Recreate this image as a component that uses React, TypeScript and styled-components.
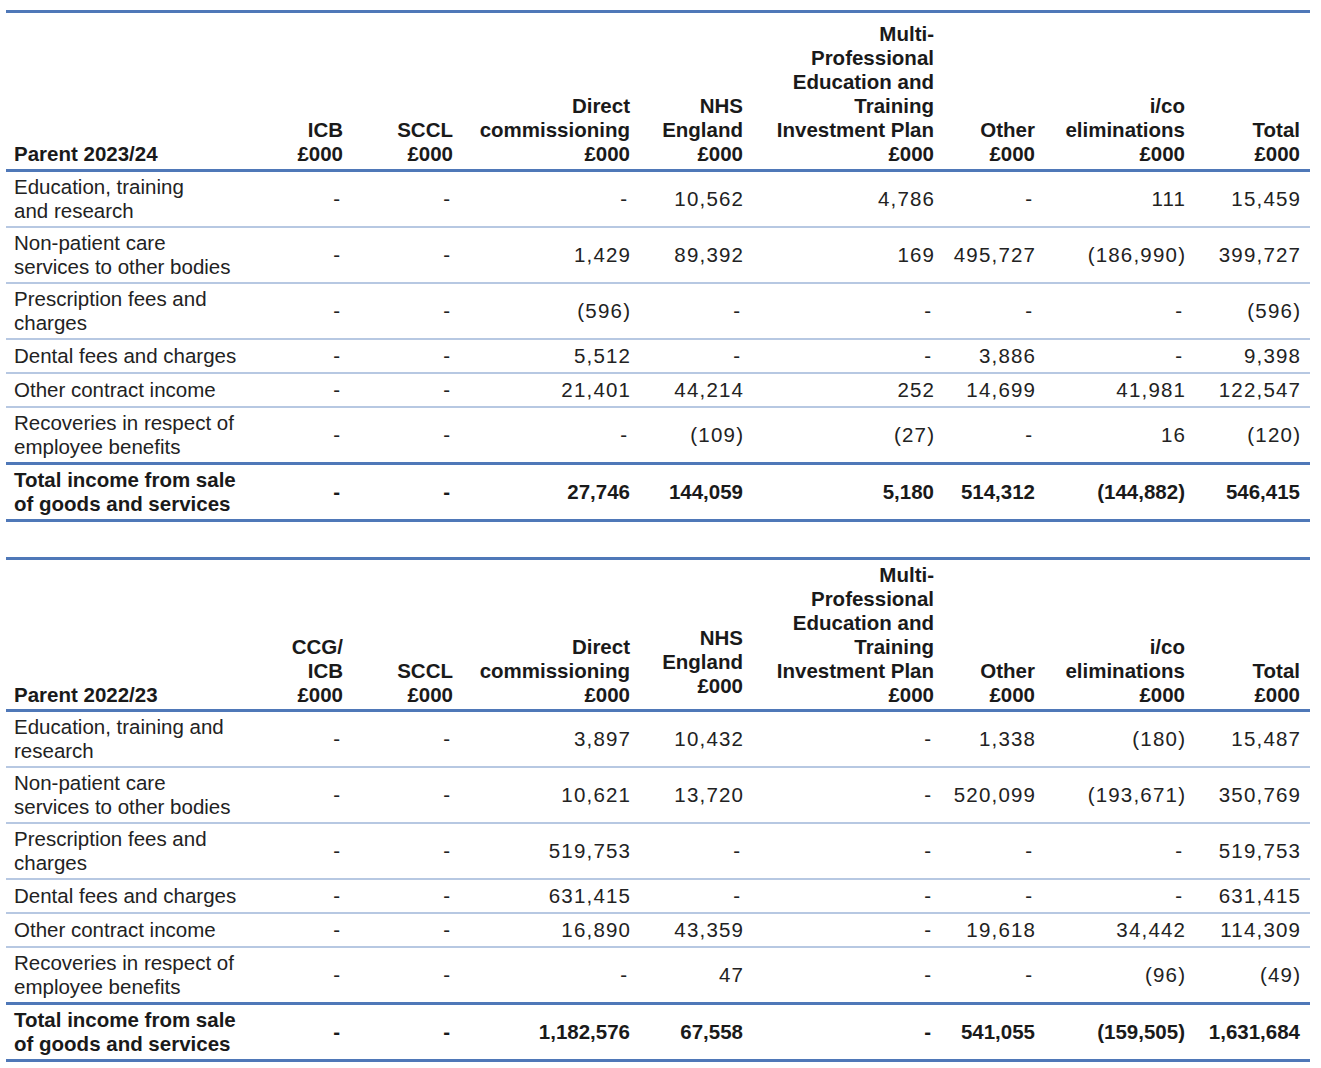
import React from "react";
import styled, { createGlobalStyle } from "styled-components";

const GlobalStyle = createGlobalStyle`
  html, body { margin: 0; padding: 0; background: #ffffff; }
  body { font-family: "Liberation Sans", Arial, sans-serif; color: #1c1c1c; }
`;

const COLS = "244px 100px 110px 177px 113px 191px 101px 150px 118px";
const THICK = "#4f78b8";
const LIGHT = "#b7c8e2";

const Page = styled.div`
  padding: 10px 11px 8px 6px;
  width: 1304px;
`;

const Table = styled.div<{ $gap?: number }>`
  margin-top: ${(p) => p.$gap ?? 0}px;
  border-top: 3px solid ${THICK};
  font-size: 20.5px;
  line-height: 24px;
`;

const HeaderRow = styled.div<{ $top: number; $bottom: number }>`
  display: grid;
  grid-template-columns: ${COLS};
  padding-top: ${(p) => p.$top}px;
  padding-bottom: ${(p) => p.$bottom}px;
  border-bottom: 3px solid ${THICK};
  font-weight: bold;
  color: #1a1a1a;
`;

const HeadCell = styled.div<{ $first?: boolean; $last?: boolean; $lift?: number }>`
  align-self: end;
  text-align: ${(p) => (p.$first ? "left" : "right")};
  padding: 0 ${(p) => (p.$last ? 10 : 7)}px ${(p) => p.$lift ?? 0}px ${(p) => (p.$first ? 8 : 0)}px;
  white-space: nowrap;
`;

const Row = styled.div<{ $strong?: boolean; $heavy?: boolean }>`
  display: grid;
  grid-template-columns: ${COLS};
  align-items: center;
  min-height: 34px;
  padding: 3px 0;
  box-sizing: border-box;
  border-bottom: ${(p) => (p.$heavy ? `3px solid ${THICK}` : `2px solid ${LIGHT}`)};
  font-weight: ${(p) => (p.$strong ? "bold" : "normal")};
  color: ${(p) => (p.$strong ? "#1a1a1a" : "#222222")};
`;

const Label = styled.div`
  padding-left: 8px;
  white-space: nowrap;
`;

const Num = styled.div<{ $last?: boolean; $dash?: boolean; $strong?: boolean }>`
  text-align: right;
  white-space: nowrap;
  letter-spacing: ${(p) => (p.$strong ? 0 : 1.2)}px;
  padding-right: ${(p) => (p.$last ? 10 : 7) + (p.$dash ? 3 : 0) - (p.$strong ? 0 : 1.2)}px;
`;

type DataRow = { label: string[]; values: string[] };

type TableData = {
  heads: { lines: string[]; lift?: number }[];
  top: number;
  bottom: number;
  rows: DataRow[];
  total: DataRow;
};

const mpet = ["Multi-", "Professional", "Education and", "Training", "Investment Plan", "£000"];

const t1: TableData = {
  top: 9,
  bottom: 3,
  heads: [
    { lines: ["Parent 2023/24"] },
    { lines: ["ICB", "£000"] },
    { lines: ["SCCL", "£000"] },
    { lines: ["Direct", "commissioning", "£000"] },
    { lines: ["NHS", "England", "£000"] },
    { lines: mpet },
    { lines: ["Other", "£000"] },
    { lines: ["i/co", "eliminations", "£000"] },
    { lines: ["Total", "£000"] },
  ],
  rows: [
    { label: ["Education, training", "and research"], values: ["-", "-", "-", "10,562", "4,786", "-", "111", "15,459"] },
    { label: ["Non-patient care", "services to other bodies"], values: ["-", "-", "1,429", "89,392", "169", "495,727", "(186,990)", "399,727"] },
    { label: ["Prescription fees and", "charges"], values: ["-", "-", "(596)", "-", "-", "-", "-", "(596)"] },
    { label: ["Dental fees and charges"], values: ["-", "-", "5,512", "-", "-", "3,886", "-", "9,398"] },
    { label: ["Other contract income"], values: ["-", "-", "21,401", "44,214", "252", "14,699", "41,981", "122,547"] },
    { label: ["Recoveries in respect of", "employee benefits"], values: ["-", "-", "-", "(109)", "(27)", "-", "16", "(120)"] },
  ],
  total: { label: ["Total income from sale", "of goods and services"], values: ["-", "-", "27,746", "144,059", "5,180", "514,312", "(144,882)", "546,415"] },
};

const t2: TableData = {
  top: 3,
  bottom: 2,
  heads: [
    { lines: ["Parent 2022/23"] },
    { lines: ["CCG/", "ICB", "£000"] },
    { lines: ["SCCL", "£000"] },
    { lines: ["Direct", "commissioning", "£000"] },
    { lines: ["NHS", "England", "£000"], lift: 9 },
    { lines: mpet },
    { lines: ["Other", "£000"] },
    { lines: ["i/co", "eliminations", "£000"] },
    { lines: ["Total", "£000"] },
  ],
  rows: [
    { label: ["Education, training and", "research"], values: ["-", "-", "3,897", "10,432", "-", "1,338", "(180)", "15,487"] },
    { label: ["Non-patient care", "services to other bodies"], values: ["-", "-", "10,621", "13,720", "-", "520,099", "(193,671)", "350,769"] },
    { label: ["Prescription fees and", "charges"], values: ["-", "-", "519,753", "-", "-", "-", "-", "519,753"] },
    { label: ["Dental fees and charges"], values: ["-", "-", "631,415", "-", "-", "-", "-", "631,415"] },
    { label: ["Other contract income"], values: ["-", "-", "16,890", "43,359", "-", "19,618", "34,442", "114,309"] },
    { label: ["Recoveries in respect of", "employee benefits"], values: ["-", "-", "-", "47", "-", "-", "(96)", "(49)"] },
  ],
  total: { label: ["Total income from sale", "of goods and services"], values: ["-", "-", "1,182,576", "67,558", "-", "541,055", "(159,505)", "1,631,684"] },
};

const Lines: React.FC<{ lines: string[] }> = ({ lines }) => (
  <>
    {lines.map((l, i) => (
      <React.Fragment key={i}>
        {i > 0 && <br />}
        {l}
      </React.Fragment>
    ))}
  </>
);

const BodyRow: React.FC<{ row: DataRow; strong?: boolean; heavy?: boolean }> = ({ row, strong, heavy }) => (
  <Row $strong={strong} $heavy={heavy}>
    <Label>
      <Lines lines={row.label} />
    </Label>
    {row.values.map((v, i) => (
      <Num key={i} $last={i === row.values.length - 1} $dash={v === "-"} $strong={strong}>
        {v}
      </Num>
    ))}
  </Row>
);

const IncomeTable: React.FC<{ data: TableData; gap?: number }> = ({ data, gap }) => (
  <Table $gap={gap}>
    <HeaderRow $top={data.top} $bottom={data.bottom}>
      {data.heads.map((h, i) => (
        <HeadCell key={i} $first={i === 0} $last={i === data.heads.length - 1} $lift={h.lift}>
          <Lines lines={h.lines} />
        </HeadCell>
      ))}
    </HeaderRow>
    {data.rows.map((r, i) => (
      <BodyRow key={i} row={r} heavy={i === data.rows.length - 1} />
    ))}
    <BodyRow row={data.total} strong heavy />
  </Table>
);

export default function App() {
  return (
    <>
      <GlobalStyle />
      <Page>
        <IncomeTable data={t1} />
        <IncomeTable data={t2} gap={35} />
      </Page>
    </>
  );
}
